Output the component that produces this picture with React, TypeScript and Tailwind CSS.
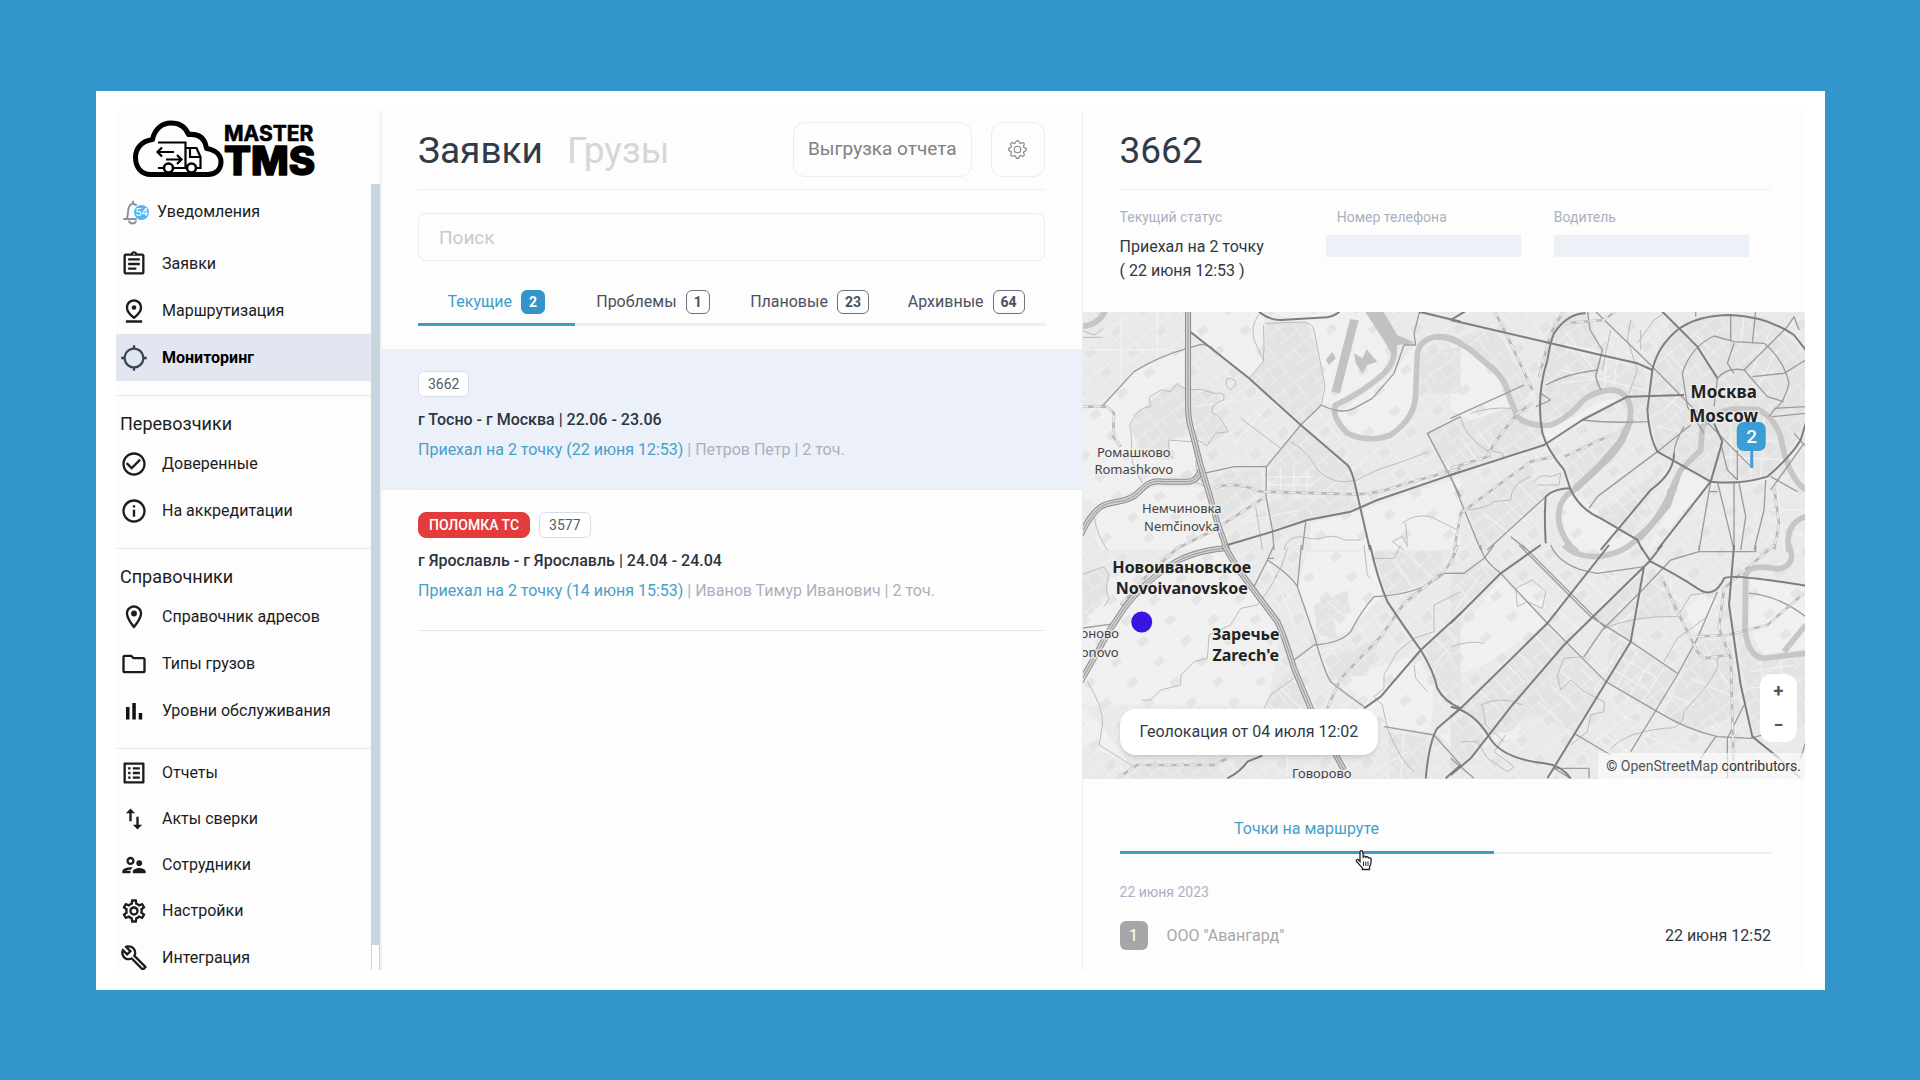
import type { ReactNode } from 'react'
import { BsGear } from 'react-icons/bs'
import {
	MdCheckCircleOutline,
	MdImportExport,
	MdLocationSearching,
	MdOutlineAssignment,
	MdOutlineBuild,
	MdOutlineFolder,
	MdOutlineInfo,
	MdOutlineListAlt,
	MdOutlineLocationOn,
	MdOutlinePinDrop,
	MdOutlineSettings,
	MdOutlineSupervisorAccount,
} from 'react-icons/md'

type RoadKind = 'river' | 'water' | 'motorway' | 'main' | 'road' | 'path' | 'rail' | 'street' | 'dark' | 'light'

type Tile = { transform: string; roads: [RoadKind, string][] }

// every tile is drawn at three units per map pixel
const tiles: Tile[] = [
	{
		transform: 'translate(-2 -2) scale(0.3333)',
		roads: [
			['light', 'M0 300L65 290L160 185L310 120V330L360 470L200 520L60 590L0 560Z'],
			['light', 'M330 0H550L545 150L505 205L330 65Z'],
			['light', 'M560 0H860L930 110L900 200L760 280L722 285L733 230L700 60Z'],
			['light', 'M940 190L1010 90L1005 250Q1000 340 900 388Q800 380 770 310Z'],
			['light', 'M60 600L200 530L370 530L430 720H60Q30 660 60 600Z'],
			['light', 'M690 640L830 605L1140 500V720H690Z'],
			['dark', 'M150 350Q200 260 290 220L320 245V380L265 390V450L180 440Z'],
			['dark', 'M330 245L420 250L400 300L440 365L378 408L330 320Z'],
			['dark', 'M560 40L680 35L730 200L720 285L660 340L510 205L550 150Z'],
			['dark', 'M600 415L660 350L800 470L825 540L570 550V470Z'],
			['dark', 'M1020 130L1140 110V250H1020Z'],
			['dark', 'M1040 370L1140 320V450L1080 460Z'],
			['dark', 'M560 570L820 560L830 600L575 660Z'],
			['dark', 'M380 500L540 480L545 540L420 630Z'],
			['river', 'M0 50Q55 45 75 0'],
			['river', 'M925 85Q960 140 910 190Q850 245 765 285Q750 320 800 370Q860 400 930 375Q1010 320 1005 240L1010 130Q1020 85 1070 80Q1120 80 1145 105'],
			['water', 'M850 0H905L950 75L985 90L1005 100L950 105L945 150L905 85Z'],
			['water', 'M820 130L845 145L858 118L890 155L860 165L845 190L825 160Z'],
			['water', 'M735 150L755 125L765 145L745 165Z'],
			['water', 'M808 28L834 30L778 250L752 245Z'],
			['street', 'M822 40L768 235'],
			['street', 'M600 470V540M640 470V545M680 480V550M560 500H700M560 525H700'],
			['street', 'M740 60L600 0M340 290L560 260L600 300M460 400L560 290M470 640L560 620L660 600M0 120H300M120 20V220M230 0V150'],
			['path', 'M0 82H65M0 60L40 75L68 55'],
			['path', 'M505 205L548 155L550 100L548 45M548 150L520 90Q510 50 530 20L545 0'],
			['path', 'M145 350Q170 290 210 290L205 262L240 240L270 245L290 220Q310 245 360 238L400 250Q440 245 428 270Q385 285 395 308L415 320L443 365L405 370L378 408Q350 380 325 395L265 390Q260 440 280 445M150 350L155 460L185 520'],
			['path', 'M440 205Q430 225 448 240L465 225Q470 205 440 205'],
			['path', 'M480 325L600 415M630 395Q690 430 710 480Q760 530 830 510Q880 480 950 460L1045 425'],
			['path', 'M525 590L545 720M40 620Q50 680 80 720M610 720Q620 680 660 680Q700 690 720 685Q760 670 790 690L840 690'],
			['path', 'M965 640Q1000 610 1050 620L1130 660M970 720L935 695L965 680L980 710L975 640'],
			['road', 'M65 288L160 185Q230 140 320 115L360 103Q390 105 400 120'],
			['path', 'M553 40L670 36Q695 40 700 60L733 230L722 285'],
			['road', 'M722 285L660 345L557 470L556 560L575 660L580 720'],
			['road', 'M370 490L460 470H557'],
			['road', 'M722 285Q780 315 820 295L875 265L940 190L970 105L1005 105L1000 70L1018 0'],
			['road', 'M1140 320L1040 370L1140 560M675 635L665 720'],
			['rail', 'M400 535Q460 510 540 545L830 553Q900 550 960 525L1140 475'],
			['rail', 'M280 720L400 660L555 560M0 290H80L100 310L97 380L120 410'],
			['main', 'M322 60L505 205L660 345L800 465Q815 480 830 555L868 720'],
			['main', 'M530 0Q560 30 600 30L740 22Q770 15 780 0'],
			['main', 'M440 705L575 665L680 630L810 605L890 570L1140 485'],
			['main', 'M1015 5L1140 35'],
			['motorway', 'M0 675Q35 600 70 585C110 570 130 580 165 555C200 520 210 510 250 515L320 515Q350 515 360 480'],
			['motorway', 'M322 0V290Q322 330 335 370L358 460L385 550L410 640L440 720'],
			['path', 'M330 515Q370 520 380 540M345 450L350 495L372 525'],
		],
	},
	{
		transform: 'translate(368 -2) scale(0.3333)',
		roads: [
			['dark', 'M0 90L130 50L240 240L200 320L130 180Z'],
			['dark', 'M300 110L580 180L590 330H550L480 240L380 290L270 340L255 260Z'],
			['dark', 'M620 110L740 20L940 20L1065 130V350L950 500L780 515L620 425L595 300Z'],
			['dark', 'M0 350L190 290L230 350L270 400L0 490Z'],
			['dark', 'M345 440L520 350L440 470L370 530Z'],
			['dark', 'M50 600L230 470L280 560L110 720H90Z'],
			['dark', 'M440 620L640 470L540 680Z'],
			['dark', 'M310 20L410 10L450 120L300 95Z'],
			['light', 'M320 50L410 40L440 130L300 95Z'],
			['light', 'M280 350Q380 330 430 280L520 260L400 320L285 400Z'],
			['light', 'M335 560L370 550L550 690L500 720H380Q330 680 335 600Z'],
			['light', 'M700 480L770 520L600 720H590L650 600Z'],
			['light', 'M0 90L60 120L160 210L180 290L60 330L0 300Z'],
			['light', 'M760 420L790 350L810 400L780 510L700 480Z'],
			['light', 'M830 190L880 180L900 290L820 300L760 280Z'],
			['street', 'M340 60L430 180M470 120L460 240M500 130L490 230M330 180L580 240M330 220L480 200M640 120L700 180M620 250L700 300M640 300L700 240M620 350L720 370M720 60L780 120M880 20L870 100M960 60L900 190M980 120L920 230M840 320V500M900 300V510M940 320L930 500M860 380L1010 400M820 440L1000 450M30 380L90 470M80 360L130 430M100 610L200 690M150 560L240 650M200 520L270 590M490 560L560 640M520 530L590 600M700 560L840 640M960 600L1060 600M980 550L1000 720M900 600L1060 680'],
			['river', 'M-40 80Q0 80 60 120L130 180Q165 210 175 260L200 320Q230 350 300 345Q340 330 380 290Q420 240 490 240Q540 250 540 310Q530 390 470 450L370 540Q315 570 325 640Q340 700 380 725'],
			['river', 'M560 690Q640 610 670 520L690 480L750 420L755 350Q800 300 850 297L920 298Q970 320 990 380Q1010 500 1065 540'],
			['river', 'M1065 620Q1000 640 1015 725'],
			['water', 'M545 685L575 690L660 590L690 500L650 540L640 600Z'],
			['water', 'M535 320L550 330L520 400L440 490L380 545L365 530L440 460L500 390Z'],
			['path', 'M250 515Q270 490 300 500L330 490L325 525L260 525M30 600Q100 600 130 575L180 570Q180 520 240 500'],
			['path', 'M540 30L530 90L560 180L535 250M560 100L610 30L640 10M440 230L435 190L455 120M480 60L455 180M570 60V120'],
			['path', 'M0 325L220 225M30 320Q40 380 120 430M60 310Q120 290 180 295M120 445L110 420L155 430L160 445'],
			['road', 'M0 325L220 225M285 225Q350 190 440 180M300 270L270 250M300 270L255 290'],
			['road', 'M410 0L418 60L455 120L435 200L450 240M395 330Q480 340 590 335'],
			['road', 'M790 78Q720 110 695 190L710 290L760 370M790 78L850 95L940 100Q1000 150 1015 220Q1000 280 970 300L955 320'],
			['road', 'M790 290L800 205Q830 170 880 180L950 260L1000 275'],
			['road', 'M880 180L1010 50L1030 20L1045 60M905 200L1000 190L1065 150M970 295L1065 290M965 320L1065 310M1060 400L960 540M1065 410L1030 370'],
			['road', 'M850 100L830 160L850 190M905 100L915 0M735 0V20M840 15V90'],
			['road', 'M720 345L620 425L440 560L415 595M700 350Q670 400 670 430'],
			['road', 'M780 515L745 720M800 515L850 720M850 515V720M945 510L940 600L910 720M865 520L885 620L870 720M775 545H800'],
			['road', 'M285 560L110 720M0 500L90 720M180 680L230 720M1040 545L960 500'],
			['road', 'M430 0L600 165L900 470M810 400L830 480L860 510M860 420V510'],
			['rail', 'M130 0L175 90L245 240M245 280L200 310L130 400L110 440L0 475M340 0L300 70L265 200'],
			['rail', 'M480 375L340 440M310 440L240 455L150 520L30 610L10 720M970 530L985 640L970 720'],
			['rail', 'M340 40L460 30L500 0'],
			['main', 'M0 30L50 0M0 30L300 100L450 135L560 160L605 180'],
			['main', 'M0 495L280 405L395 330L530 260L700 255'],
			['main', 'M405 10Q350 10 310 70Q300 90 290 150Q255 260 275 370Q290 420 340 480L360 540Q390 600 450 625L560 690L575 720'],
			['main', 'M605 180Q620 110 680 60Q740 15 840 15Q950 20 1030 75L1065 120'],
			['main', 'M605 180L590 300Q595 380 620 425L780 515Q870 525 950 500Q1020 440 1050 390L1065 340'],
			['main', 'M630 0L740 110L800 205M780 515L815 395L790 340'],
			['main', 'M670 430Q670 490 600 540L450 720M780 515L620 720M285 700Q280 620 285 560Q310 535 360 535'],
		],
	},
	{
		transform: 'translate(-2 233) scale(0.3333)',
		roads: [
			['light', 'M0 180L90 100L300 30L430 20L600 250L560 480H0Z'],
			['light', 'M0 480L60 540L150 660L0 590Z'],
			['light', 'M680 20L870 20L910 150L800 260L700 290L650 130Z'],
			['light', 'M780 400L1010 330L1060 430L1050 560L900 540Z'],
			['light', 'M1080 570L1140 540V640Z'],
			['dark', 'M0 80L80 70L80 150L50 190L0 230Z'],
			['dark', 'M570 440L640 370L680 490H560Z'],
			['dark', 'M700 180L800 135L810 200L760 220L770 280L710 270Z'],
			['dark', 'M740 340L900 280L860 390L780 400L750 410Z'],
			['dark', 'M1030 300L1140 220V470Q1090 460 1060 380Z'],
			['dark', 'M920 560L1040 580L1030 700H930Z'],
			['dark', 'M170 670L400 640L440 700H130Z'],
			['dark', 'M880 20L1080 20L1090 70L1000 130L920 150Z'],
			['street', 'M560 50L640 230M590 180L680 110M700 100L850 20M660 340L780 300M620 400L700 440M600 430L660 490M740 170L850 260M930 30L1000 130M970 20L1060 100M1060 200L1130 290M1040 250L1110 330M1060 360L1130 280M960 440L1050 460M970 560L960 700M0 300L100 380L90 450M120 340L250 400M240 170L250 300M620 600V700M800 640L900 600M860 690L980 620'],
			['path', 'M0 90L70 65L85 90Q70 130 85 160L70 185M590 90L560 140L530 180L480 190L450 240L385 270L380 340L340 350L300 390L300 420L240 435L210 465H185'],
			['path', 'M20 410Q70 490 65 540L55 600L160 665M850 0L860 90L870 100M880 40H940L960 0'],
			['path', 'M1140 140L1060 180V260L1000 280L950 320L910 390V430L880 455L905 480L920 550Q960 650 1000 680M1000 360L1005 400L1040 440'],
			['path', 'M620 10L600 70L580 100M550 490L570 450L640 400'],
			['road', 'M520 125L560 45L580 0M580 40H560M0 250L110 235'],
			['road', 'M560 45Q630 90 650 125L700 270Q730 380 750 410Q800 450 850 485M650 125L662 0'],
			['road', 'M640 345L700 300Q780 295 810 260Q840 200 880 155Q980 150 1040 120L1090 85H1140'],
			['road', 'M910 545L1060 570L1140 660'],
			['rail', 'M1130 0Q1110 70 1070 95L970 175L900 275L780 400L740 490'],
			['rail', 'M110 700L170 660L400 660L440 640M300 0L200 90L120 180'],
			['main', 'M868 0Q890 100 920 170Q980 260 1020 315Q1060 380 1070 430Q1090 470 1140 490'],
			['main', 'M1140 205L1020 315L900 455L850 490M1140 490L1070 550Q1045 590 1035 700M1095 700L1140 660'],
			['main', 'M440 700Q480 680 500 650L545 632'],
			['motorway', 'M0 410L90 250L130 190Q180 120 270 60Q330 20 430 10'],
			['motorway', 'M430 0L470 70L590 230Q610 270 640 370L690 490L790 675'],
		],
	},
	{
		transform: 'translate(368 233) scale(0.3333)',
		roads: [
			['dark', 'M0 100L80 50L140 85L0 220Z'],
			['dark', 'M290 245L390 340L180 560L110 570L30 490Z'],
			['dark', 'M420 220L580 80L540 290Z'],
			['dark', 'M350 300L460 410L370 560L190 480Z'],
			['dark', 'M480 270L680 385L600 500L465 410Z'],
			['dark', 'M590 90L630 90L700 210L560 220Z'],
			['dark', 'M740 280L840 290L870 500L740 560L640 510Z'],
			['dark', 'M860 280L940 350L1065 340V540L910 570Z'],
			['dark', 'M0 500L100 570L60 640L0 690Z'],
			['light', 'M200 120L280 125L285 190L200 185Z'],
			['light', 'M50 230L150 100L285 235L120 350L0 400V280Z'],
			['light', 'M700 200L760 140L800 170L740 270Z'],
			['light', 'M900 100L1065 130V310L930 330L895 240Z'],
			['light', 'M350 40L560 0L440 40Z'],
			['light', 'M690 520L760 450L810 360L840 450L790 550Z'],
			['light', 'M115 470L220 480L200 580L130 590Z'],
			['street', 'M10 200L90 90M60 170L20 120M200 320L250 370M160 350L220 410M120 390L180 450M80 430L150 500M250 270L310 330M330 200L390 260M370 160L430 220M300 180L340 230M410 110L470 160M450 70L520 130M500 200L560 160M490 250L550 200M390 370L430 410M330 380L410 450M300 420L380 500M260 470L340 540M510 300L430 440M560 320L480 450M600 350L520 480M640 370L560 490M500 330L620 400M480 370L600 440M600 110L690 170M660 100V200M900 380L1030 360M890 430L1040 420M930 350L960 560M990 340L1000 500M760 300L830 420M720 400L860 460M660 450L730 480M500 500L600 560M560 560L700 620M450 560L530 620'],
			['river', 'M340 0Q370 35 440 35Q520 25 560 -20'],
			['river', 'M1015 0Q1040 65 980 72Q895 55 885 90L883 250Q890 335 940 340L1065 325M1065 240L1000 320'],
			['path', 'M195 130L245 105L285 140L275 190L230 170L200 185L195 130'],
			['path', 'M0 305Q60 285 100 295M90 480Q150 450 215 480M95 480L105 540L160 590M30 590L80 590L110 640L170 680L190 665L130 620L165 570'],
			['path', 'M400 335L340 340L320 390L330 435L360 405L400 440L460 470L460 500L420 510L410 560L360 600'],
			['path', 'M480 610Q530 560 640 550Q700 555 700 500L770 420L800 370V340'],
			['path', 'M460 250Q560 210 680 215L720 150L760 145M640 350L680 280L770 215'],
			['road', 'M300 0Q330 70 440 85L580 65M90 0Q90 40 150 85L290 235L465 410L620 500Q710 555 800 575L900 580L935 570'],
			['road', 'M660 45L580 130L455 255L400 335M660 45L745 20H915V0M745 20V0'],
			['road', 'M205 0L420 215L540 290L680 385M215 0L425 210L465 250'],
			['road', 'M800 140L740 280L680 390L540 620M895 145Q980 150 1065 215'],
			['road', 'M880 480L830 580V700M370 565L480 630M795 575L750 640M1065 590L1050 640M985 640L1050 700'],
			['road', 'M0 85H40L100 40L130 0M0 640L70 700M360 700L310 670H415V700'],
			['rail', 'M630 90L680 200L740 320L760 340L830 330M740 275L830 270L950 240L1065 140'],
			['rail', 'M970 0L820 130L805 250L840 340L850 700M0 60L20 0'],
			['main', 'M0 235L150 85L270 0M475 0L290 235L30 490L0 515'],
			['main', 'M635 0L595 50L340 300L185 480L60 640L0 690M580 65L540 290L400 520L290 700'],
			['main', 'M850 0L835 180L870 420L905 575L985 640'],
			['main', 'M570 5L600 50Q680 90 740 130Q790 165 820 100Q840 85 1065 122'],
			['main', 'M0 485Q70 500 115 575Q150 640 280 655Q330 660 360 700'],
		],
	},
]

const areaLayers: RoadKind[] = ['light', 'dark']
const lineLayers: RoadKind[] = ['street', 'river', 'water', 'path', 'road', 'rail', 'main', 'motorway']

const Road = ({ kind, d }: { kind: RoadKind; d: string }) => {
	if (kind === 'light') return <path d={d} fill="#f0f0f0" />
	if (kind === 'dark') return <path d={d} fill="#e3e3e3" />
	if (kind === 'water') return <path d={d} fill="#c2c2c2" />
	if (kind === 'street') return <path d={d} fill="none" stroke="#f1f1f1" strokeWidth="4" />
	if (kind === 'river') return <path d={d} fill="none" stroke="#c6c6c6" strokeWidth="17" />
	if (kind === 'path') return <path d={d} fill="none" stroke="#bcbcbc" strokeWidth="3" />
	if (kind === 'road') return <path d={d} fill="none" stroke="#9c9c9c" strokeWidth="4" />
	if (kind === 'main') return <path d={d} fill="none" stroke="#7e7e7e" strokeWidth="6" />
	if (kind === 'rail')
		return (
			<>
				<path d={d} fill="none" stroke="#bababa" strokeWidth="8" />
				<path d={d} fill="none" stroke="#ececec" strokeWidth="5" strokeDasharray="22 16" />
			</>
		)
	return (
		<>
			<path d={d} fill="none" stroke="#8c8c8c" strokeWidth="18" />
			<path d={d} fill="none" stroke="#d2d2d2" strokeWidth="12" />
			<path d={d} fill="none" stroke="#999" strokeWidth="3" />
		</>
	)
}

const Layers = ({ kinds }: { kinds: RoadKind[] }) => (
	<>
		{kinds.map((layer) =>
			tiles.map((tile) => (
				<g key={layer + tile.transform} transform={tile.transform} strokeLinejoin="round">
					{tile.roads.map(([kind, d]) => (kind === layer ? <Road key={d} kind={kind} d={d} /> : null))}
				</g>
			))
		)}
	</>
)

const places = [
	{ x: 51, y: 145, text: 'Ромашково', size: 13 },
	{ x: 51, y: 162, text: 'Romashkovo', size: 13 },
	{ x: 99, y: 201, text: 'Немчиновка', size: 13 },
	{ x: 99, y: 219, text: 'Nemčinovka', size: 13 },
	{ x: 17, y: 326, text: 'оново', size: 13 },
	{ x: 17, y: 345, text: 'onovo', size: 13 },
	{ x: 239, y: 466, text: 'Говорово', size: 13 },
	{ x: 641, y: 86, text: 'Москва', size: 17, bold: true },
	{ x: 641, y: 110, text: 'Moscow', size: 17, bold: true },
	{ x: 99, y: 261, text: 'Новоивановское', size: 16, bold: true },
	{ x: 99, y: 282, text: 'Novoivanovskoe', size: 16, bold: true },
	{ x: 163, y: 328, text: 'Заречье', size: 16, bold: true },
	{ x: 163, y: 349, text: "Zarech'e", size: 16, bold: true },
]

const CityMap = () => (
	<svg className="absolute inset-0 h-full w-full" viewBox="0 0 723 467" preserveAspectRatio="xMidYMid slice">
		<defs>
			<pattern id="blocks" width="34" height="26" patternUnits="userSpaceOnUse" patternTransform="rotate(-38)">
				<path d="M0 4H34M0 17H20M8 0V17M22 4V26M31 0V12" fill="none" stroke="#f3f3f3" />
				<path d="M10 7H20V14H10Z" fill="#e0e0e0" />
			</pattern>
		</defs>
		<rect width="723" height="467" fill="#e9e9e9" />
		<Layers kinds={areaLayers} />
		<rect width="723" height="467" fill="url(#blocks)" opacity="0.7" />
		<Layers kinds={lineLayers} />
		{places.map((place) => (
			<text
				key={place.text}
				x={place.x}
				y={place.y}
				fontSize={place.size}
				fontWeight={place.bold ? 700 : 400}
				fill={place.bold ? '#222' : '#444'}
				stroke="#f0f0f0"
				strokeWidth="3"
				strokeOpacity="0.7"
				paintOrder="stroke"
				textAnchor="middle"
				className="font-['Noto_Sans',sans-serif]"
			>
				{place.text}
			</text>
		))}
		<circle cx="59" cy="310" r="10.5" fill="#3a14e0" />
		<path d="M669 136V156" stroke="#3d9fd3" strokeWidth="3" />
		<rect x="654" y="110" width="29" height="29" rx="7" fill="#3a9dd3" />
		<text x="669" y="131" fontSize="19" fontWeight="500" fill="#fff" textAnchor="middle">2</text>
	</svg>
)

const Logo = () => (
	<svg width="184" height="65" viewBox="0 0 184 65" fill="none" stroke="#000" className="ml-[17px] mt-2">
		<path
			d="M18 55.500C8 55.500 2.500 48 2.500 38.500C2.500 29 9 22 19.500 20.500C21.500 10 29 4 38 4C46.500 4 52.500 8 55.500 15.500C66 14.500 72 19.500 73.500 29.500C83 31 88 36.500 88 43C88 50.500 82.500 55.500 75 55.500Z"
			strokeWidth="5"
			strokeLinejoin="round"
		/>
		<path d="M25 23.500H52.500V49M25 49H30M41 49H54M63 49H67.500V38L63.500 29H53M66.500 38H57V29" strokeWidth="2.200" />
		<path d="M41 33H25M29 28.500L24.500 33L29 37.500M33 40.500H48M44 36L48.500 40.500L44 45" strokeWidth="2.200" />
		<circle cx="35.500" cy="49" r="4.500" strokeWidth="2.600" />
		<circle cx="58.500" cy="49" r="4.500" strokeWidth="2.600" />
		<text x="91" y="22" fontSize="21" fontWeight="700" fill="#000" strokeWidth="0.600" strokeLinejoin="round" className="font-['Inter',sans-serif]">
			MASTER
		</text>
		<text x="91" y="56" fontSize="40" fontWeight="800" fill="#000" strokeWidth="1.500" strokeLinejoin="round" className="font-['Inter',sans-serif]">
			TMS
		</text>
	</svg>
)

const Bars = () => (
	<svg width="28" height="28" viewBox="0 0 28 28" fill="#111">
		<path d="M6 10h3.500v12.500H6zM12.300 6h3.500v16.500h-3.500zM18.700 16h3.500v6.500h-3.500z" />
	</svg>
)

const Bell = () => (
	<span className="relative block h-7 w-7">
		<svg width="28" height="28" viewBox="0 0 28 28" fill="none" stroke="#8b93a5" strokeWidth="2">
			<path d="M4 21H16M7 20C9 15 6.500 7 13 5.500L16 7M13 3.500V5.500M20 19V21" strokeLinecap="round" />
			<path d="M9 22.500C9.500 26.500 15.500 26.500 16 22.500" />
		</svg>
		<span className="absolute left-[14px] top-[7px] h-[15px] w-[15px] rounded-full bg-[#4fb9f0] text-center text-[11px] leading-[15px] text-white">54</span>
	</span>
)

const NavItem = ({ icon, label, active, last }: { icon: ReactNode; label: string; active?: boolean; last?: boolean }) => (
	<a
		href="#"
		className={`flex shrink-0 items-center gap-[14px] pl-1 text-base text-[#1c1c1c] ${last ? 'h-[46px] pt-px' : 'h-[47px]'} ${active ? 'bg-[#e1e6f0] font-bold text-black' : ''}`}
	>
		<span className="text-[28px]">{icon}</span>
		{label}
	</a>
)

const Divider = () => <hr className="mt-[14px] shrink-0 border-[#e6e8ea]" />

const Sidebar = () => (
	<aside className="flex w-[264px] shrink-0 flex-col overflow-hidden">
		<div className="h-[73px] shrink-0">
			<Logo />
		</div>
		<div className="flex min-h-0 flex-1">
			<nav className="flex flex-1 flex-col overflow-hidden">
				<a href="#" className="flex h-14 shrink-0 items-center gap-[9px] pl-1 text-base text-[#1c1c1c]">
					<Bell />
					Уведомления
				</a>
				<NavItem icon={<MdOutlineAssignment />} label="Заявки" />
				<NavItem icon={<MdOutlinePinDrop />} label="Маршрутизация" />
				<NavItem icon={<MdLocationSearching className="text-[#3c4556]" />} label="Мониторинг" active />
				<Divider />
				<h3 className="flex h-11 shrink-0 items-center pl-1 pt-3 text-lg text-[#1c1c1c]">Перевозчики</h3>
				<NavItem icon={<MdCheckCircleOutline />} label="Доверенные" />
				<NavItem icon={<MdOutlineInfo />} label="На аккредитации" />
				<Divider />
				<h3 className="flex h-11 shrink-0 items-center pl-1 pt-3 text-lg text-[#1c1c1c]">Справочники</h3>
				<NavItem icon={<MdOutlineLocationOn />} label="Справочник адресов" />
				<NavItem icon={<MdOutlineFolder />} label="Типы грузов" />
				<NavItem icon={<Bars />} label="Уровни обслуживания" />
				<Divider />
				<NavItem icon={<MdOutlineListAlt />} label="Отчеты" last />
				<NavItem icon={<MdImportExport />} label="Акты сверки" last />
				<NavItem icon={<MdOutlineSupervisorAccount />} label="Сотрудники" last />
				<NavItem icon={<MdOutlineSettings />} label="Настройки" />
				<NavItem icon={<MdOutlineBuild />} label="Интеграция" />
			</nav>
			<div className="flex w-[9px] flex-col border-x border-[#c9d5de] bg-white">
				<div className="mb-[25px] flex-1 bg-[#c9d5de]"></div>
			</div>
		</div>
	</aside>
)

const tabs = [
	{ label: 'Текущие', count: 2, active: true },
	{ label: 'Проблемы', count: 1 },
	{ label: 'Плановые', count: 23 },
	{ label: 'Архивные', count: 64 },
]

const orders = [
	{
		id: '3662',
		route: 'г Тосно - г Москва | 22.06 - 23.06',
		status: 'Приехал на 2 точку (22 июня 12:53)',
		driver: 'Петров Петр',
		active: true,
	},
	{
		id: '3577',
		alert: 'ПОЛОМКА ТС',
		route: 'г Ярославль - г Ярославль | 24.04 - 24.04',
		status: 'Приехал на 2 точку (14 июня 15:53)',
		driver: 'Иванов Тимур Иванович',
	},
]

const Orders = () => (
	<main className="min-w-0 flex-[701] border-l-2 border-[#eef1f5]">
		<div className="pl-9 pr-[37px]">
			<header className="flex h-[79px] items-center border-b border-[#eceef4] pb-px">
				<h1 className="pt-[3px] text-[37px] text-[#303b4a]">Заявки</h1>
				<button className="ml-6 pt-[3px] text-[37px] text-[#d5d6da]">Грузы</button>
				<button className="ml-auto h-[55px] rounded-xl border border-[#e9ecf4] px-[14px] text-[19px] text-[#808080]">Выгрузка отчета</button>
				<button aria-label="Настройки" className="ml-[19px] flex h-[55px] w-[54px] items-center justify-center rounded-xl border border-[#e9ecf4] text-[#8a8a8a]">
					<BsGear size={19} />
				</button>
			</header>
			<input
				aria-label="Поиск"
				placeholder="Поиск"
				className="mt-[23px] h-12 w-full rounded-lg border border-[#e9ebf4] bg-transparent px-5 text-[19px] outline-none placeholder:text-[#c9c9cc]"
			/>
			<div className="grid grid-cols-4 pt-[29px]">
				{tabs.map((tab) => (
					<button
						key={tab.label}
						className={`flex items-start justify-center gap-[9px] whitespace-nowrap border-b-[3px] pb-[9px] text-base ${tab.active ? 'border-[#3f9cc8] text-[#3f9cc8]' : 'border-[#eef0f5] text-[#4a5160]'}`}
					>
						{tab.label}
						<span
							className={`h-6 rounded-md border px-[7px] text-sm font-bold leading-[22px] ${tab.active ? 'border-[#3294c8] bg-[#3294c8] text-white' : 'border-[#6b7280]'}`}
						>
							{tab.count}
						</span>
					</button>
				))}
			</div>
		</div>
		<div className="mt-[23px]">
			{orders.map((order) => (
				<article key={order.id} className={`pl-9 ${order.active ? 'bg-[#ecf0f8]' : 'pr-[37px]'}`}>
					<div className="border-b border-[#e4e8ee] pb-[27px] pt-[22px]">
						<div className="flex gap-[9px] text-sm leading-6">
							{order.alert && <span className="rounded-lg border border-[#e23c3c] bg-[#e23c3c] px-[10px] font-medium text-white">{order.alert}</span>}
							<span className="rounded-md border border-[#d9dee6] bg-white px-[9px] text-[#555b66]">{order.id}</span>
						</div>
						<h2 className="mt-[11px] text-base font-medium text-[#2d3440]">{order.route}</h2>
						<p className="mt-[6px] text-base text-[#a9b1c0]">
							<span className="text-[#469fca]">{order.status}</span> | {order.driver} | 2 точ.
						</p>
					</div>
				</article>
			))}
		</div>
	</main>
)

const Cursor = () => (
	<svg width="20" height="23" viewBox="0 0 20 23" className="absolute -bottom-[18px] left-[234px]">
		<path
			d="M6 12.500V3.200C6 1.200 8.600 1.200 8.800 3.200L9.300 8C10 6.600 11.600 7 12 8.300C12.800 7.400 14.300 7.700 14.700 9C16 8.500 17.200 9.200 17.200 10.600C17.200 14 16.800 16 15.500 18V20.500H8.300V18.800C6 16.800 4.500 14.500 2.500 12.200C1.800 10.900 3.200 9.900 4.400 10.700Z"
			fill="#fff"
			stroke="#222"
			strokeWidth="1.300"
		/>
		<path d="M9.500 12.500V17M11.800 12.500V17M14 12.500V17" stroke="#222" />
	</svg>
)

const Details = () => (
	<section className="flex min-w-0 flex-[724] flex-col border-l border-[#e9ecf3]">
		<div className="pl-[37px] pr-[34px]">
			<header className="flex h-[79px] items-center border-b border-[#eceef4] pb-px">
				<h1 className="pt-[3px] text-[37px] text-[#303b4a]">3662</h1>
			</header>
			<dl className="grid grid-cols-3 pb-[29px] pt-[17px]">
				<div>
					<dt className="text-sm text-[#a9b1c0]">Текущий статус</dt>
					<dd className="mt-2 text-base text-[#303743]">
						Приехал на 2 точку
						<br />( 22 июня 12:53 )
					</dd>
				</div>
				<div>
					<dt className="text-sm text-[#a9b1c0]">Номер телефона</dt>
					<dd className="-ml-[11px] mr-[33px] mt-2 h-[22px] bg-[#ecf1f8]"></dd>
				</div>
				<div>
					<dt className="text-sm text-[#a9b1c0]">Водитель</dt>
					<dd className="mr-[22px] mt-2 h-[22px] bg-[#ecf1f8]"></dd>
				</div>
			</dl>
		</div>
		<div className="relative min-h-[300px] flex-1 overflow-hidden">
			<CityMap />
			<div className="absolute bottom-6 left-[37px] rounded-2xl bg-white px-5 py-[11px] text-base text-[#303b4a] shadow-md">Геолокация от 04 июля 12:02</div>
			<div className="absolute bottom-[37px] right-2 flex w-[37px] flex-col rounded-xl bg-white text-lg font-bold text-[#555]">
				<button aria-label="Приблизить" className="h-[34px]">+</button>
				<button aria-label="Отдалить" className="h-[34px]">−</button>
			</div>
			<div className="absolute bottom-0 right-0 bg-white/60 py-[3px] pl-2 pr-1 text-sm text-[#333]">
				© <a href="#" className="text-[#555]">OpenStreetMap</a> contributors.
			</div>
		</div>
		<div className="pb-5 pl-[37px] pr-[34px] pt-[38px]">
			<div className="flex">
				<div className="relative w-[374px]">
					<button className="w-full border-b-[3px] border-[#3f9cc8] pb-[10px] text-base text-[#469fca]">Точки на маршруте</button>
					<Cursor />
				</div>
				<div className="flex-1 border-b-2 border-[#edf0f5]"></div>
			</div>
			<p className="mt-7 text-sm text-[#a9b1c0]">22 июня 2023</p>
			<div className="mt-[19px] flex h-[29px] items-center text-base">
				<span className="w-7 rounded-md bg-[#a6a6a6] text-center leading-[29px] text-white">1</span>
				<span className="ml-[19px] text-[#a8a8a8]">ООО "Авангард"</span>
				<time className="ml-auto text-[#303743]">22 июня 12:52</time>
			</div>
		</div>
	</section>
)

const App = () => (
	<div className="flex min-h-screen bg-[#3396ca] pb-[90px] pl-24 pr-[95px] pt-[91px] font-['Roboto',sans-serif]">
		<div className="flex h-[calc(100vh-181px)] min-w-0 flex-1 bg-white p-5">
			<div className="flex min-w-0 flex-1 bg-[#fdfdfd]">
				<Sidebar />
				<Orders />
				<Details />
			</div>
		</div>
	</div>
)

export default App
